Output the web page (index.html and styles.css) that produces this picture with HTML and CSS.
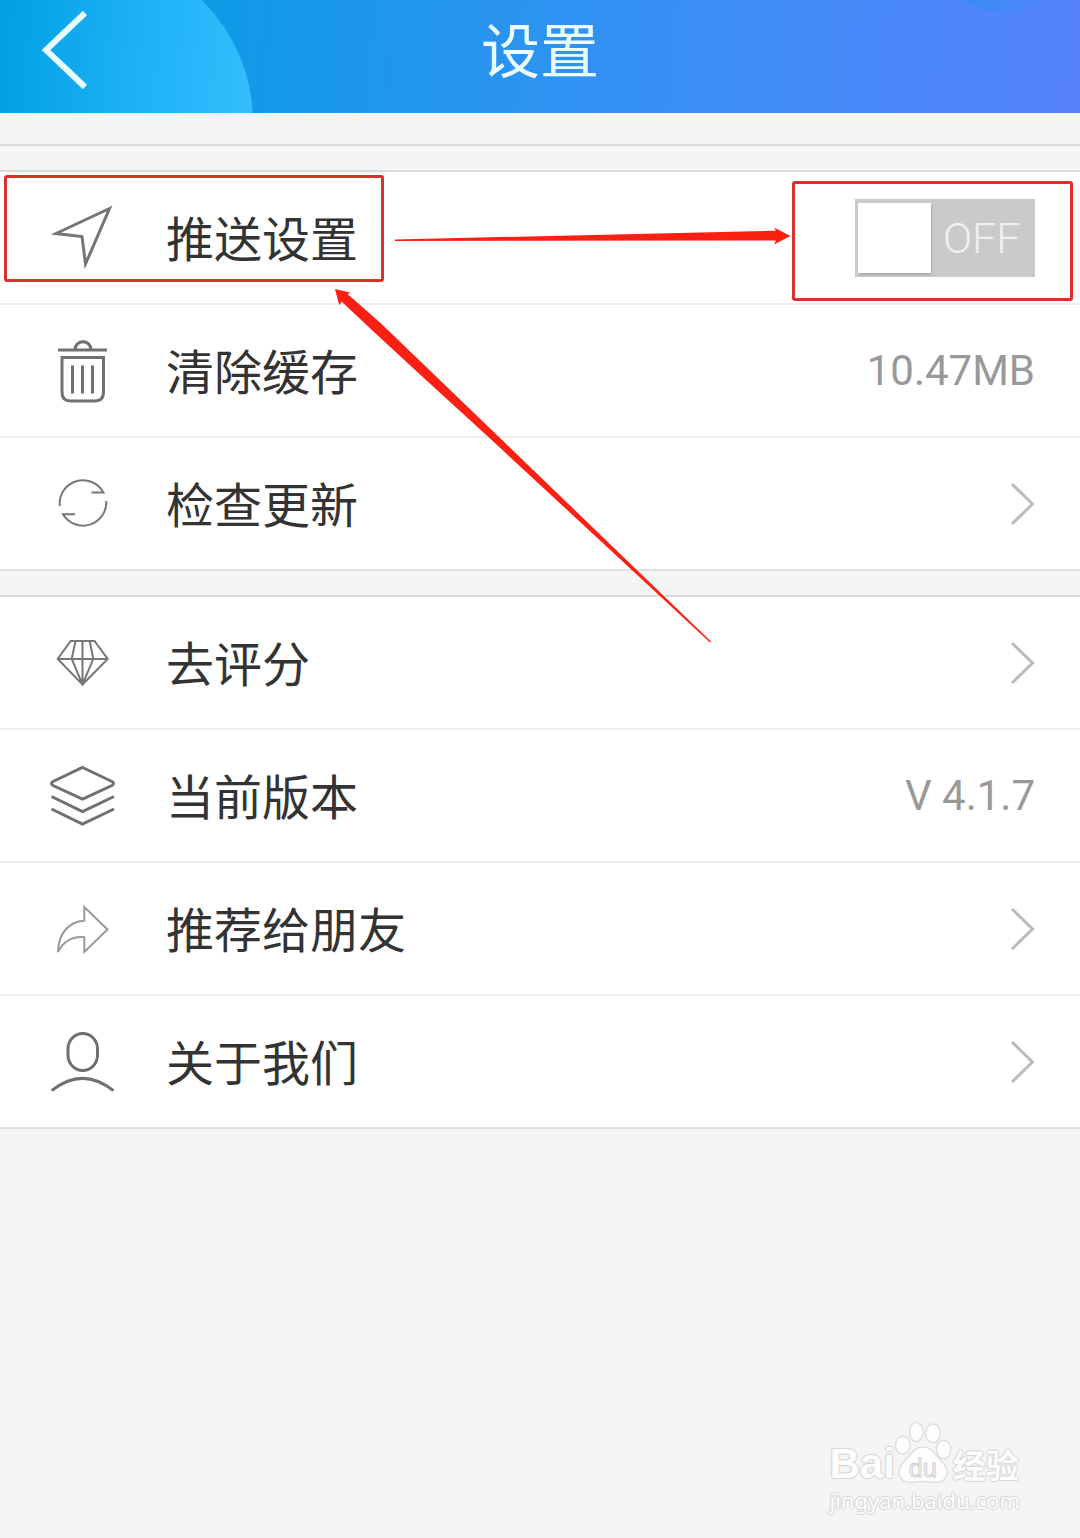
FILE: index.html
```html
<!DOCTYPE html>
<html lang="zh-CN">
<head>
<meta charset="utf-8">
<meta name="viewport" content="width=device-width, initial-scale=1">
<title>设置</title>
<link rel="stylesheet" href="styles.css">
</head>
<body>
<div class="page">
  <header class="topbar">
    <button class="back" type="button" aria-label="返回">
      <svg width="52" height="84" viewBox="0 0 52 84" aria-hidden="true"><path d="M45 4 6 41 45 78"/></svg>
    </button>
    <h1 class="title">设置</h1>
  </header>

  <main class="content">
    <div class="strip"></div>

    <section class="group">
      <div class="row">
        <svg class="icon" viewBox="0 0 66 65" aria-hidden="true"><path d="M59.500 3.500 6 28.500 32 31.500 35.500 59Z"/></svg>
        <label class="label" for="push">推送设置</label>
        <label class="switch">
          <input class="knob" id="push" type="checkbox" role="switch">
          <span class="state">OFF</span>
        </label>
        <span class="mark mark-label"></span>
        <span class="mark mark-switch"></span>
      </div>
      <button class="row" type="button">
        <svg class="icon icon-bold" viewBox="0 0 66 65" aria-hidden="true"><path d="M8 12H57M25 12C25 1 41 1 41 12M12 19.500H53.500V54Q53.500 63 45 63H20.500Q12 63 12 54ZM22.500 27.500V55.500M32.500 27.500V55.500M42.500 27.500V55.500"/></svg>
        <span class="label">清除缓存</span>
        <span class="value">10.47MB</span>
      </button>
      <a class="row" href="#update">
        <svg class="icon icon-fine" viewBox="0 0 66 65" aria-hidden="true"><path d="M9.800 35A23.300 23.300 0 0 1 53.500 21.500H41.500M56.300 30A23.300 23.300 0 0 1 13 43.200H25"/></svg>
        <span class="label">检查更新</span>
        <svg class="chevron" viewBox="0 0 26 43" aria-hidden="true"><path d="M3 2 23.500 22 3 42"/></svg>
      </a>
    </section>

    <section class="group">
      <a class="row" href="#rate">
        <svg class="icon icon-fine" viewBox="0 0 66 65" aria-hidden="true"><path d="M20.700 11H44.500L57.700 29 32.500 54.500 7.700 29ZM7.700 29H57.700M32.500 11V54.500M25.500 11 21.700 29 32.500 54.500 43.300 29 39.700 11"/></svg>
        <span class="label">去评分</span>
        <svg class="chevron" viewBox="0 0 26 43" aria-hidden="true"><path d="M3 2 23.500 22 3 42"/></svg>
      </a>
      <div class="row">
        <svg class="icon icon-bold" viewBox="0 0 66 65" aria-hidden="true"><path d="M32.500 4.500 62 18.500Q65 20.500 62 22.500L32.500 36 3 22.500Q0 20.500 3 18.500ZM1.500 33.500 32.500 48.500 64 33.500M1.500 46 32.500 61 64 46"/></svg>
        <span class="label">当前版本</span>
        <span class="value">V 4.1.7</span>
      </div>
      <a class="row" href="#share">
        <svg class="icon icon-light" viewBox="0 0 66 65" aria-hidden="true"><path d="M34.300 11 57.500 33.500 34.300 56V41.200C22 40 14 44.500 8 56 8 38.500 18 26 34.300 24.500Z"/></svg>
        <span class="label">推荐给朋友</span>
        <svg class="chevron" viewBox="0 0 26 43" aria-hidden="true"><path d="M3 2 23.500 22 3 42"/></svg>
      </a>
      <a class="row" href="#about">
        <svg class="icon icon-bold" viewBox="0 0 66 65" aria-hidden="true"><rect x="18" y="4.500" width="29.500" height="37" rx="14.700" ry="15.500"/><path d="M1.700 61.700Q32.500 37 63.500 61.700"/></svg>
        <span class="label">关于我们</span>
        <svg class="chevron" viewBox="0 0 26 43" aria-hidden="true"><path d="M3 2 23.500 22 3 42"/></svg>
      </a>
    </section>

    <footer class="brand">
      <div class="brand-name">
        <span class="brand-latin">Bai</span>
        <svg class="paw" viewBox="250 65 177 190" aria-hidden="true">
          <ellipse cx="276" cy="138" rx="22" ry="27"/>
          <ellipse cx="317" cy="98" rx="21" ry="29"/>
          <ellipse cx="367" cy="102" rx="22" ry="28"/>
          <ellipse cx="399" cy="151" rx="22" ry="28"/>
          <path d="M337 143C365 143 374 168 394 187 423 215 409 250 376 250 360 250 352 247 337 247 322 247 314 250 298 250 265 250 252 215 280 187 300 168 309 143 337 143Z"/>
          <text x="336" y="233" text-anchor="middle">du</text>
        </svg>
        <span class="brand-cjk">经验</span>
      </div>
      <div class="brand-url">jingyan.baidu.com</div>
    </footer>
  </main>

  <svg class="arrows" width="720" height="650" viewBox="0 0 720 650" aria-hidden="true">
    <path d="M711 641.500 500 438 420 361 380 322.500 347.500 294 351 292.700 335 289 339.300 305.300 341.500 301.500 374 332 414 369 496 444 710 642.500Z"/>
  </svg>
  <svg class="arrows" width="800" height="260" viewBox="0 0 800 260" aria-hidden="true">
    <path d="M395 239.500 776 230.700 774 227.500 790.500 236 774 244.500 776 240.500 395 241Z"/>
  </svg>
</div>
</body>
</html>
```
FILE: styles.css
```css
* {
  box-sizing: border-box;
}

body {
  margin: 0;
  background: #f5f5f5;
  color: #333;
  font-family: Roboto, "Noto Sans CJK SC", sans-serif;
}

.page {
  position: relative;
  display: flex;
  flex-direction: column;
  min-height: 100vh;
}

/* Top bar */
.topbar {
  position: relative;
  display: grid;
  grid-template-columns: 1fr auto 1fr;
  align-items: center;
  height: 113px;
  padding: 0 40px 12px;
  overflow: hidden;
  background: linear-gradient(95deg, #0f9ae6 20%, #2196ee 38%, #3b8ff5 65%, #4b88fa 83%, #5682fd);
}

.topbar::before,
.topbar::after {
  content: "";
  position: absolute;
  border-radius: 50%;
}

.topbar::before {
  left: -87px;
  top: -48px;
  width: 340px;
  height: 340px;
  background: linear-gradient(95deg, #02a0e5 26%, #1fb2f5 65%, #36c0ff);
}

.topbar::after {
  right: 0;
  top: -137px;
  width: 150px;
  height: 150px;
  background: linear-gradient(90deg, #338ff2, #5285fc 90%);
}

.back {
  z-index: 1;
  justify-self: start;
  display: flex;
  padding: 0;
  border: 0;
  background: none;
}

.back path {
  fill: none;
  stroke: #e6fcff;
  stroke-width: 6;
}

.title {
  margin: 0;
  padding-top: 4px;
  color: #ecfcff;
  font-size: 59px;
  font-weight: 400;
  line-height: 80px;
}

/* Settings groups */
.content {
  flex: 1;
  display: flex;
  flex-direction: column;
  gap: 24px;
}

.strip {
  height: 33px;
  border-bottom: 2px solid #dadada;
}

.group {
  display: flex;
  flex-direction: column;
  border-top: 2px solid #dadada;
}

.row {
  position: relative;
  display: flex;
  align-items: center;
  gap: 50px;
  min-height: 133px;
  padding: 0 45px 0 50px;
  border: 0;
  border-bottom: 2px solid #ececec;
  background: #fff;
  color: inherit;
  font: inherit;
  text-align: left;
  text-decoration: none;
}

.row:last-child {
  border-bottom-color: #e0e0e0;
}

.icon {
  flex: none;
  width: 66px;
  height: 65px;
  fill: none;
  stroke: #757575;
  stroke-width: 3;
}

.icon-bold {
  stroke: #707070;
}

.icon-fine {
  stroke: #777;
  stroke-width: 2;
}

.icon-light {
  stroke: #999;
  stroke-width: 2;
}

.label {
  flex: 1;
  padding-top: 6px;
  font-size: 48px;
  line-height: 72px;
}

.value {
  color: #999;
  font-size: 42px;
  line-height: 50px;
}

.chevron {
  width: 26px;
  height: 43px;
  fill: none;
  stroke: #bbb;
  stroke-width: 3;
}

/* Switch */
.switch {
  display: flex;
  align-items: center;
  gap: 12px;
  width: 180px;
  height: 78px;
  padding: 0 3px;
  background: #cacaca;
}

.knob {
  appearance: none;
  width: 73px;
  height: 70px;
  margin: 0;
  background: #fff;
  box-shadow: 1px 2px 2px #aaa;
}

.state {
  color: #f0f0f0;
  font-size: 43px;
  font-weight: 300;
  line-height: 50px;
}

/* Callouts drawn over the list */
.mark {
  position: absolute;
  border: 3px solid #d8322b;
  border-radius: 3px;
  pointer-events: none;
}

.mark-label {
  left: 4px;
  top: 3px;
  width: 380px;
  height: 107px;
}

.mark-switch {
  right: 7px;
  top: 9px;
  width: 281px;
  height: 120px;
}

.arrows {
  position: absolute;
  left: 0;
  top: 0;
  fill: #fb2012;
  pointer-events: none;
}

/* Brand mark */
.brand {
  align-self: flex-end;
  margin-top: auto;
  padding: 0 60px 22px 0;
  color: #fdfdfd;
  text-shadow: 1px 0 1px #d4d4d4, -1px 0 1px #d4d4d4, 0 1px 1px #d4d4d4, 0 -1px 1px #d4d4d4;
}

.brand-name {
  display: flex;
  align-items: flex-end;
}

.brand-latin {
  font-family: "Liberation Sans", sans-serif;
  font-size: 42px;
  font-weight: 700;
  line-height: 40px;
}

.paw {
  width: 59px;
  height: 63px;
  margin-left: -1px;
  fill: #fdfdfd;
  stroke: #dcdcdc;
  stroke-width: 4;
}

.paw text {
  fill: #f5f5f5;
  stroke: #d0d0d0;
  stroke-width: 3;
  font-family: "Liberation Sans", sans-serif;
  font-size: 76px;
  text-shadow: none;
}

.brand-cjk {
  font-size: 33px;
  font-weight: 700;
  line-height: 34px;
}

.brand-url {
  font-family: "Noto Sans", sans-serif;
  font-size: 22px;
  line-height: 32px;
}
```
